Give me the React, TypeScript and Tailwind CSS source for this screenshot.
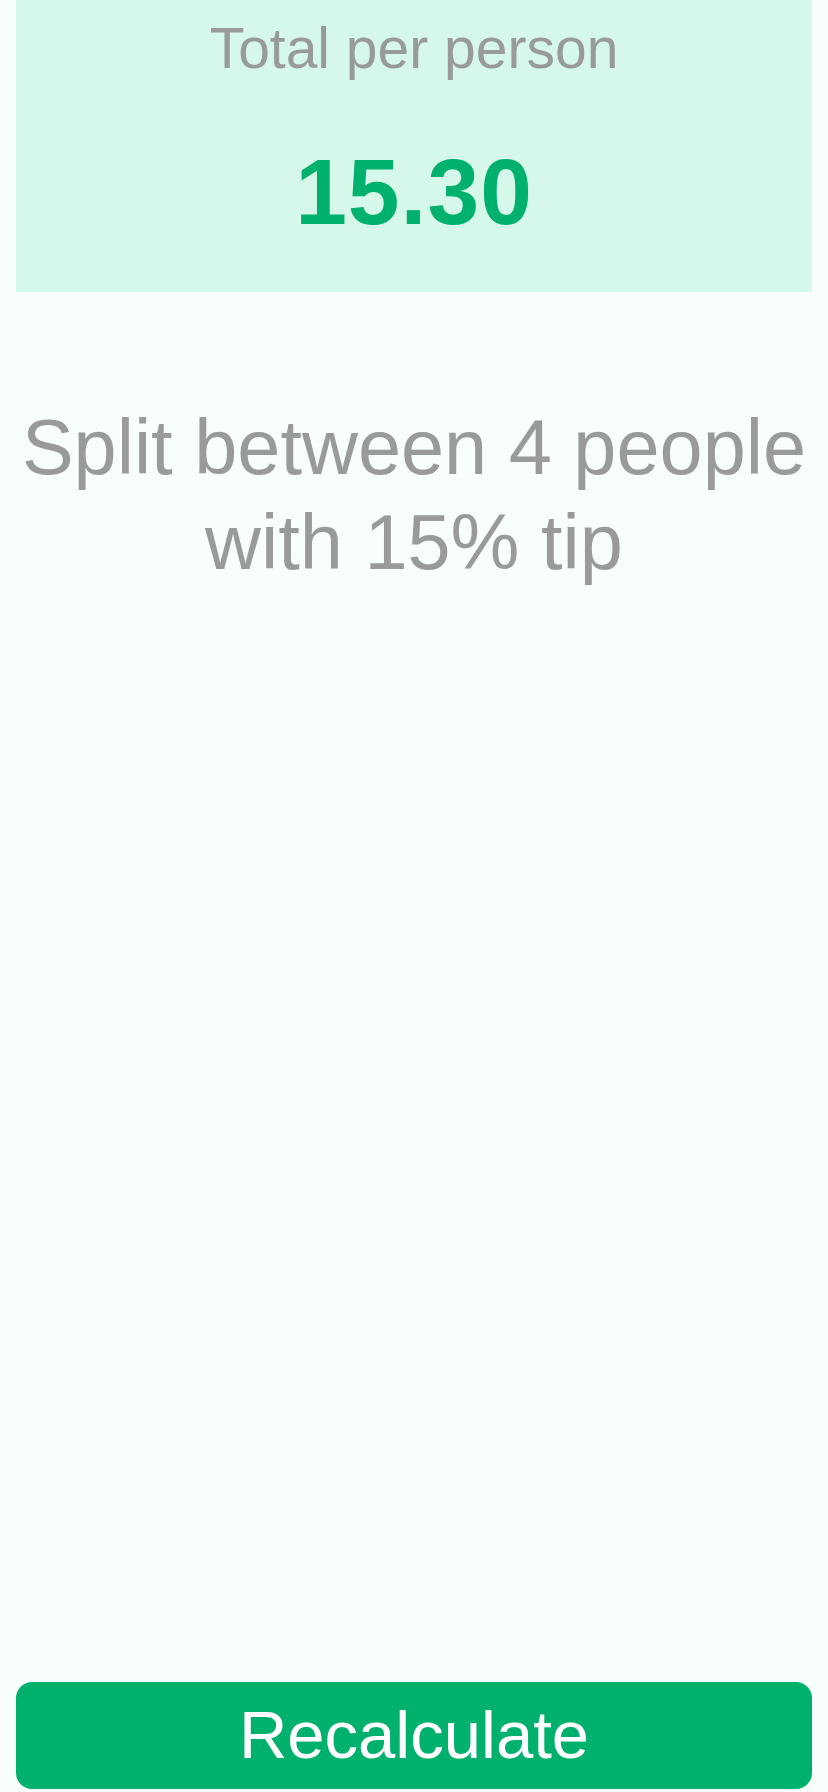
export default function App() {
  return (
    <div className="flex h-[1792px] w-full flex-col bg-[#f7fefb] font-['Liberation_Sans',Arial,sans-serif]">
      <div className="mx-4 flex h-[292px] flex-col items-center bg-[#d6f8ea] pt-4">
        <p className="text-[57px] leading-[64px] text-[#999b99]">Total per person</p>
        <p className="mt-[66px] text-[93px] font-bold leading-[92px] tracking-[1px] text-[#00b16d]">
          15.30
        </p>
      </div>
      <p className="mx-4 mt-[108px] text-center text-[77.5px] leading-[95px] text-[#999b99]">
        Split between 4 people with 15% tip
      </p>
      <div className="flex-1" />
      <button className="mx-4 mb-[3px] h-[107px] rounded-[16px] bg-[#00b16d] text-[67px] text-white">
        Recalculate
      </button>
    </div>
  );
}
